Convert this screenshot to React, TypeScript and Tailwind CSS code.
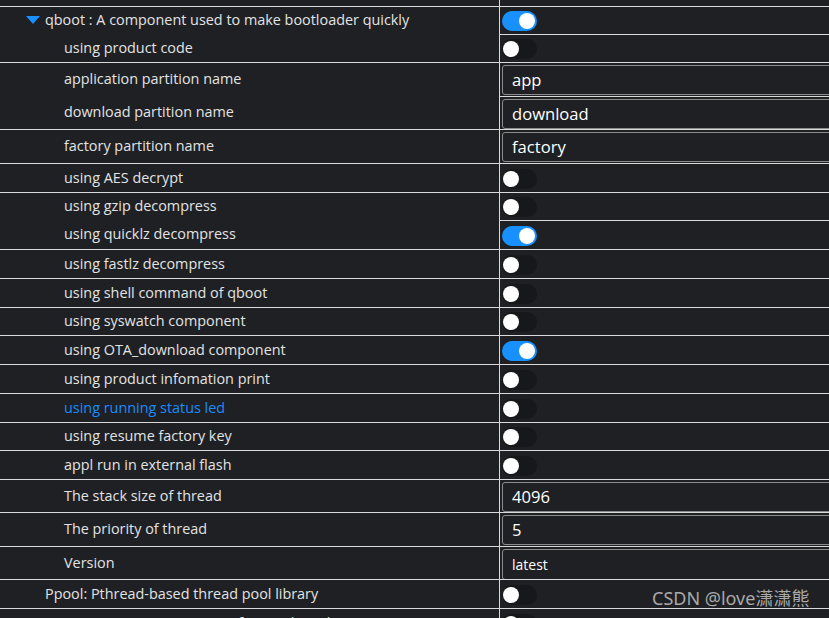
import React from "react";

type Row = {
    label: string
    level: 0 | 1
    arrow?: boolean
    kind: "on" | "off" | "input" | "select"
    value?: string
    h: number
    leftLine?: boolean
    blue?: boolean
}

const rows: Row[] = [
    { label: "qboot : A component used to make bootloader quickly", level: 0, arrow: true, kind: "on", h: 28, leftLine: true },
    { label: "using product code", level: 1, kind: "off", h: 28 },
    { label: "application partition name", level: 1, kind: "input", value: "app", h: 34, leftLine: true },
    { label: "download partition name", level: 1, kind: "input", value: "download", h: 33 },
    { label: "factory partition name", level: 1, kind: "input", value: "factory", h: 34, leftLine: true },
    { label: "using AES decrypt", level: 1, kind: "off", h: 29, leftLine: true },
    { label: "using gzip decompress", level: 1, kind: "off", h: 28, leftLine: true },
    { label: "using quicklz decompress", level: 1, kind: "on", h: 29 },
    { label: "using fastlz decompress", level: 1, kind: "off", h: 29, leftLine: true },
    { label: "using shell command of qboot", level: 1, kind: "off", h: 29, leftLine: true },
    { label: "using syswatch component", level: 1, kind: "off", h: 28, leftLine: true },
    { label: "using OTA_download component", level: 1, kind: "on", h: 29, leftLine: true },
    { label: "using product infomation print", level: 1, kind: "off", h: 29, leftLine: true },
    { label: "using running status led", level: 1, kind: "off", h: 29, leftLine: true, blue: true },
    { label: "using resume factory key", level: 1, kind: "off", h: 28, leftLine: true },
    { label: "appl run in external flash", level: 1, kind: "off", h: 29, leftLine: true },
    { label: "The stack size of thread", level: 1, kind: "input", value: "4096", h: 33, leftLine: true },
    { label: "The priority of thread", level: 1, kind: "input", value: "5", h: 34, leftLine: true },
    { label: "Version", level: 1, kind: "select", value: "latest", h: 33, leftLine: true },
    { label: "Ppool: Pthread-based thread pool library", level: 0, kind: "off", h: 29, leftLine: true },
    { label: "CMSIS_RTOS2: CMSIS RTOS2 for RT-Thread", level: 0, kind: "off", h: 29, leftLine: true },
]

const Toggle = ({ on }: { on: boolean }) => (
    <div className={`relative w-[35px] h-[20px] rounded-full mt-[1px] ${on ? "bg-[#1890ff]" : "bg-[#16181b]"}`}>
        <div className={`absolute top-[2px] w-[16px] h-[16px] rounded-full bg-white ${on ? "left-[17px]" : "left-[1px]"}`} />
    </div>
)

const App = () => {
    return (
        <div
            className="relative w-[829px] h-[618px] overflow-hidden bg-[#1e2023] text-[#e3e3e3]"
            style={{ fontFamily: "'Open Sans', 'Noto Sans', sans-serif" }}
        >
            {/* partial row above */}
            <div className="flex h-[6px]">
                <div className="w-[500px] shrink-0 border-r border-[#dadada]" />
                <div className="flex-1" />
            </div>

            {rows.map((row) => (
                <div key={row.label} className="flex" style={{ height: row.h }}>
                    {/* label cell */}
                    <div
                        className={`w-[500px] shrink-0 border-r border-[#dadada] flex items-center text-[14.4px] pb-[1px] ${row.leftLine ? "border-t" : ""} ${row.level === 0 ? "pl-[26px]" : "pl-[64px]"}`}
                    >
                        {row.arrow && (
                            <svg width="14" height="8" viewBox="0 0 14 8" className="mr-[5px]">
                                <polygon points="0,0 14,0 7,8" fill="#1890ff" />
                            </svg>
                        )}
                        <span className={`${row.level === 0 && !row.arrow ? "pl-[19px]" : ""} ${row.blue ? "text-[#1a8cff]" : ""}`}>
                            {row.label}
                        </span>
                    </div>

                    {/* value cell */}
                    <div className={`flex-1 border-t border-[#dadada] pl-[2px] flex ${row.kind === "on" || row.kind === "off" ? "items-center" : "items-start pt-[2px]"}`}>
                        {(row.kind === "on" || row.kind === "off") && <Toggle on={row.kind === "on"} />}
                        {row.kind === "input" && (
                            <div className="w-[360px] shrink-0 h-[30px] border border-[#8c8c8c] rounded-[3px] pl-[9px] flex items-center text-[16.6px] text-white">
                                {row.value}
                            </div>
                        )}
                        {row.kind === "select" && (
                            <div className="w-[360px] shrink-0 h-[31px] border border-[#8c8c8c] rounded-[3px] pl-[9px] flex items-center text-[14px] text-white">
                                {row.value}
                            </div>
                        )}
                    </div>
                </div>
            ))}

            {/* watermark */}
            <div
                className="absolute left-[652px] top-[585px] text-[18px] text-[#a9a9a9]"
                style={{ fontFamily: "'Noto Sans', 'Noto Sans CJK SC', sans-serif" }}
            >
                CSDN @love潇潇熊
            </div>
        </div>
    );
};

export default App;
